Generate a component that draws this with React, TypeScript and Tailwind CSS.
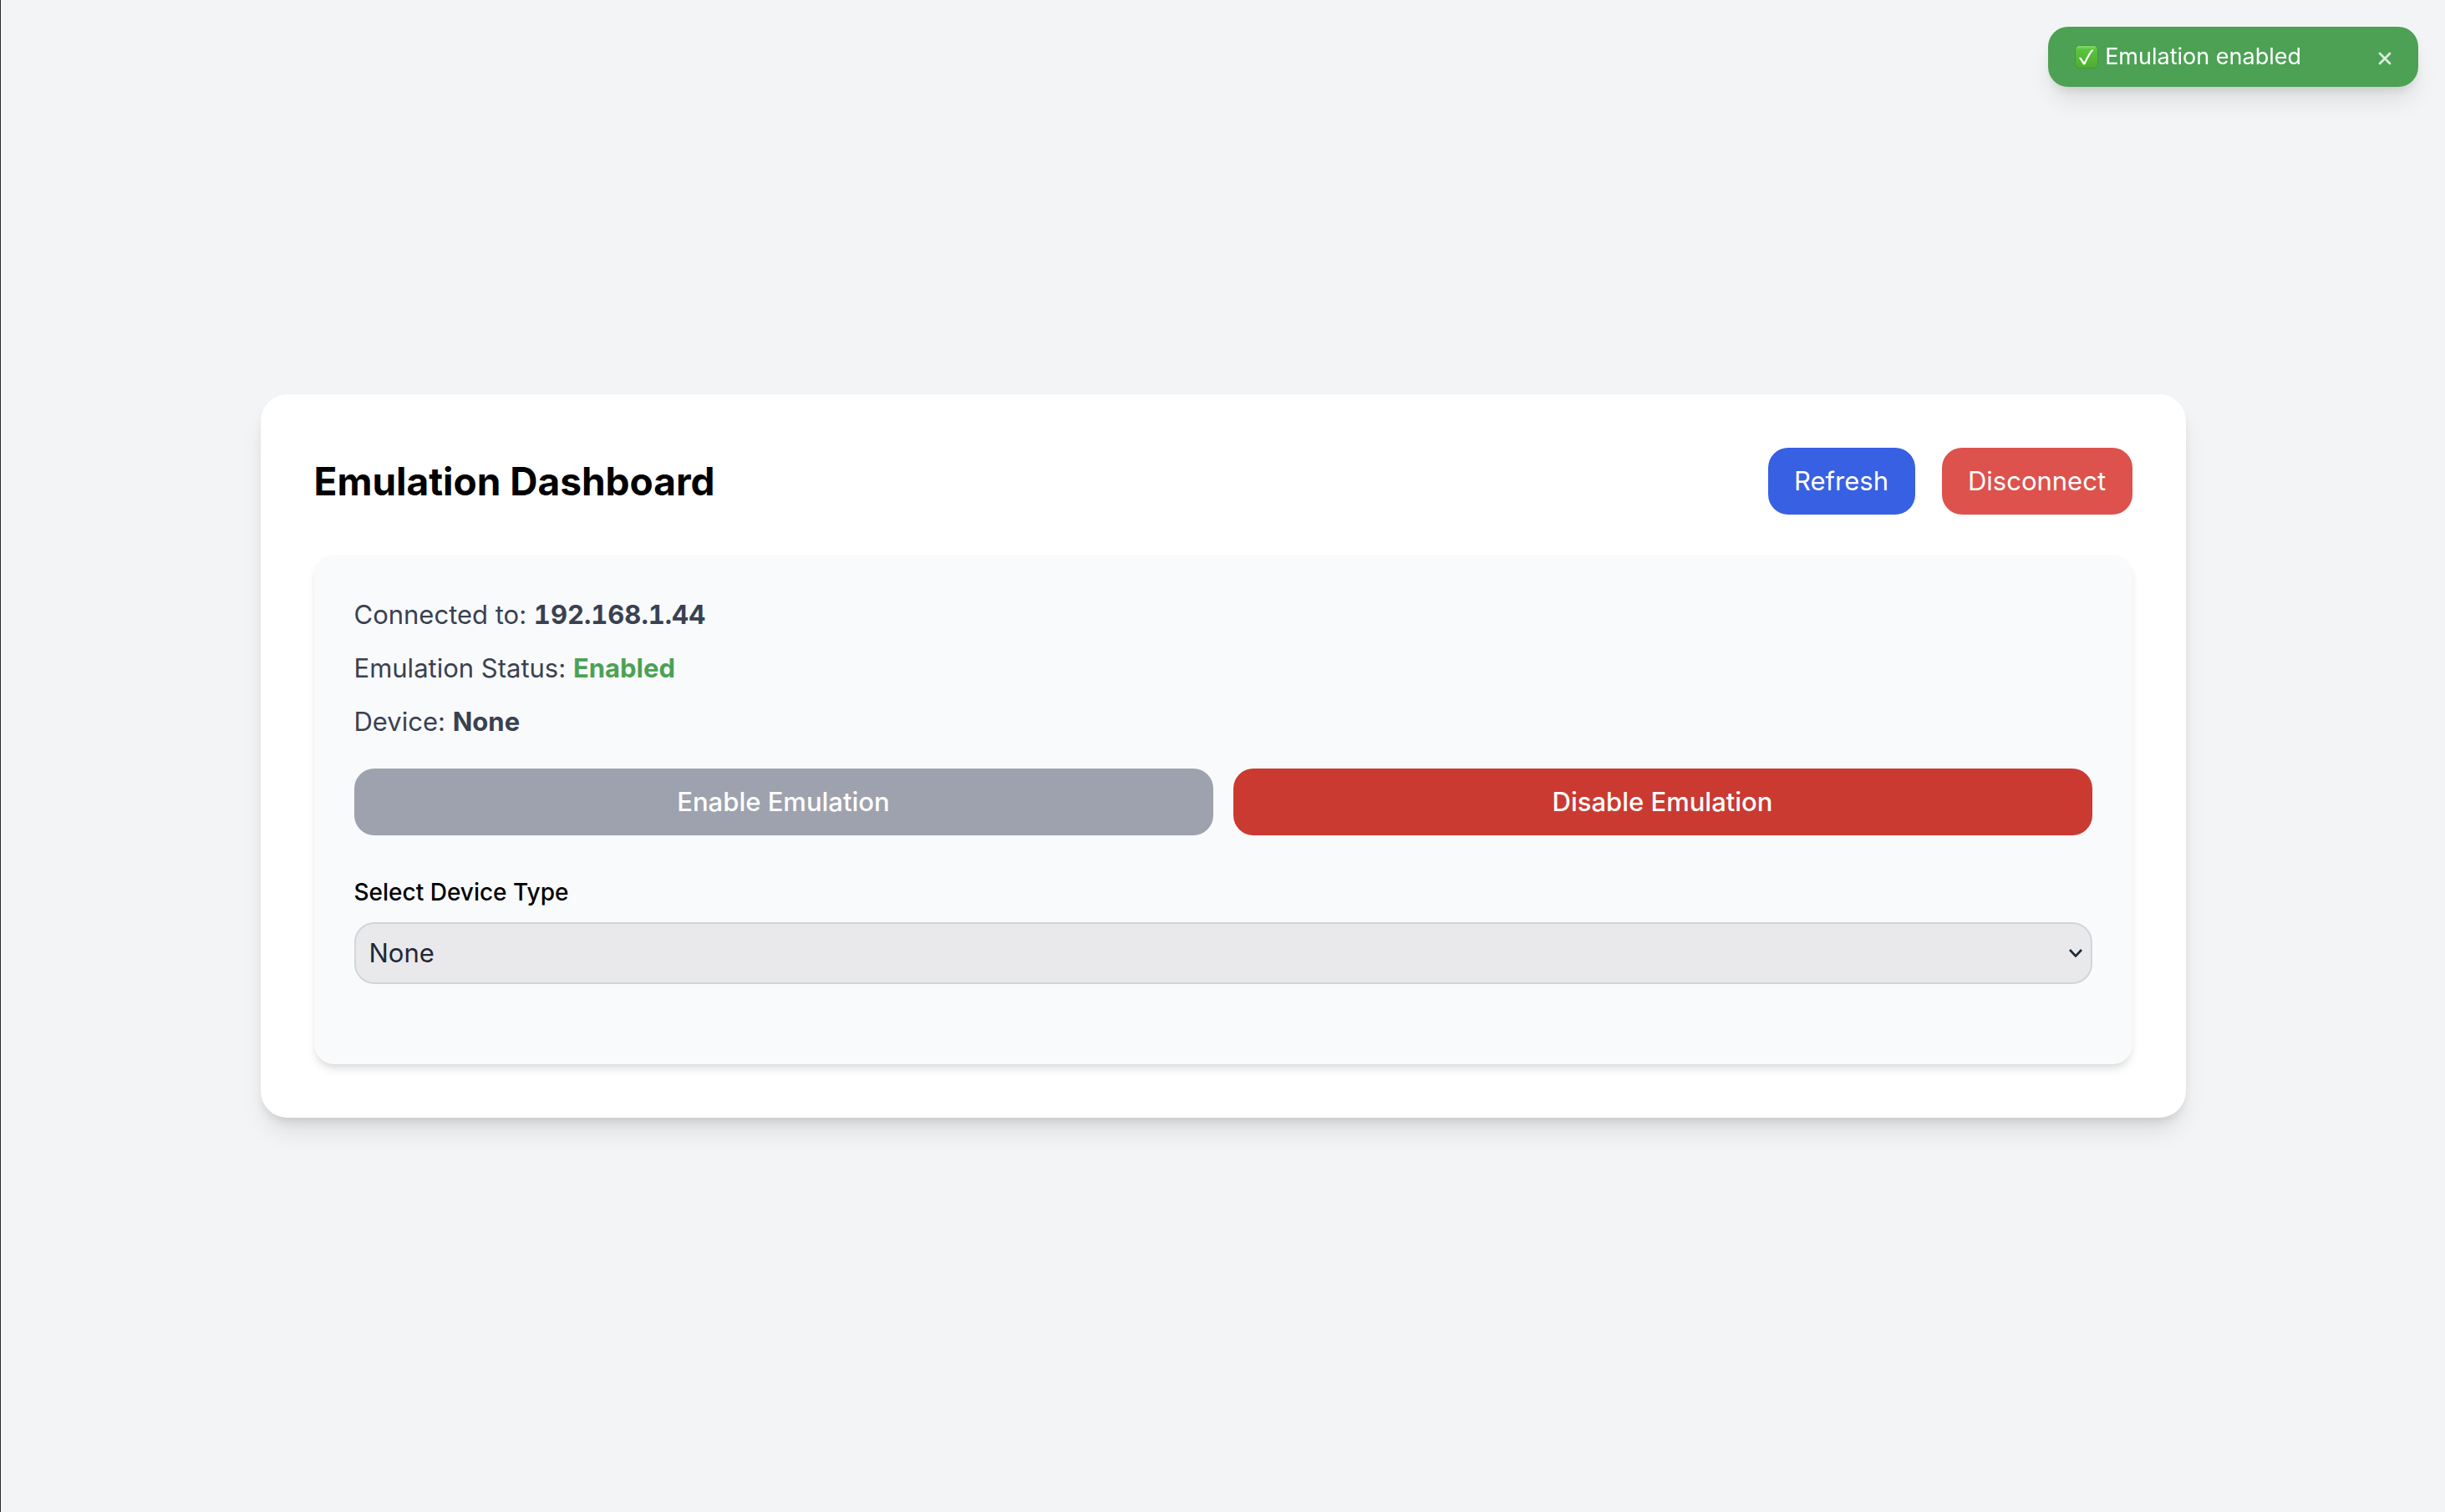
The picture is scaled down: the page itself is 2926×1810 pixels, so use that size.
import { useState } from "react";

function CheckBadge() {
  return (
    <svg viewBox="0 0 28 28" className="h-7 w-7 shrink-0" aria-hidden="true">
      <defs>
        <linearGradient id="badge" x1="0" y1="0" x2="0" y2="1">
          <stop offset="0" stopColor="#8fdc7c" />
          <stop offset="0.18" stopColor="#58c43c" />
          <stop offset="1" stopColor="#50ac31" />
        </linearGradient>
      </defs>
      <rect x="0.5" y="0.5" width="27" height="27" rx="5" fill="url(#badge)" stroke="#3f9a34" />
      <path
        d="M5 15.300c.9-.8 2.200-.6 2.900.4l3.300 4.900c2.300-5.200 5-10 8.100-14.300.6-.8 1.700-1 3.400-.7-4.300 5.300-7.500 11-10.100 17.200-.5.9-2.100.9-2.600.1z"
        fill="#fff"
      />
    </svg>
  );
}

function Toast({ onClose }: { onClose: () => void }) {
  return (
    <div
      role="status"
      className="fixed top-8 right-8 flex items-center rounded-3xl bg-[#4ca154] px-8 py-4 text-white shadow-[0_20px_30px_-6px_rgba(0,0,0,0.1),0_8px_12px_-4px_rgba(0,0,0,0.1)]"
    >
      <CheckBadge />
      <span className="ml-2 text-[27px] leading-10">Emulation enabled</span>
      <button type="button" aria-label="Dismiss" onClick={onClose} className="ml-23 flex h-10 w-4 items-center justify-center opacity-80">
        <svg viewBox="0 0 16 16" className="mt-1 h-4 w-4" aria-hidden="true">
          <path d="M2 2l12 12M14 2L2 14" stroke="currentColor" strokeWidth="2.800" strokeLinecap="round" />
        </svg>
      </button>
    </div>
  );
}

export default function App() {
  const [toast, setToast] = useState(true);
  const [device, setDevice] = useState("None");

  return (
    <div className="flex min-h-screen items-center justify-center border-l border-[#2b2b2d] bg-[#f3f4f6] font-['Inter',sans-serif] text-[31px] leading-12 text-black">
      {toast && <Toast onClose={() => setToast(false)} />}
      <main className="w-full max-w-[2304px] rounded-[32px] bg-white p-16 shadow-[0_20px_30px_-6px_rgba(0,0,0,0.1),0_8px_12px_-4px_rgba(0,0,0,0.1)]">
        <header className="mb-12 flex items-center justify-between">
          <h1 className="text-[46px] leading-16 font-bold">Emulation Dashboard</h1>
          <div className="flex gap-8">
            <button type="button" className="w-44 rounded-3xl bg-[#3860e2] py-4 text-white">
              Refresh
            </button>
            <button type="button" className="w-57 rounded-3xl bg-[#dd524c] py-4 text-white">
              Disconnect
            </button>
          </div>
        </header>

        <section className="rounded-3xl bg-[#f9fafc] p-12 shadow-[0_8px_12px_-2px_rgba(0,0,0,0.1),0_4px_8px_-4px_rgba(0,0,0,0.1)]">
          <div className="space-y-4 text-[#394150]">
            <p>
              Connected to: <strong className="tabular-nums">192.168.1.44</strong>
            </p>
            <p>
              Emulation Status: <strong className="text-[#4ca154]">Enabled</strong>
            </p>
            <p>
              Device: <strong>{device}</strong>
            </p>
          </div>

          <div className="mt-8 grid grid-cols-2 gap-6">
            <button type="button" disabled className="rounded-3xl bg-[#9ea2ae] py-4 font-medium text-white">
              Enable Emulation
            </button>
            <button type="button" className="rounded-3xl bg-[#ca3a31] py-4 font-medium text-white">
              Disable Emulation
            </button>
          </div>

          <div className="my-12">
            <label htmlFor="device-type" className="mb-4 block text-[28px] leading-10 font-medium">
              Select Device Type
            </label>
            <div className="relative">
              <select
                id="device-type"
                value={device}
                onChange={(e) => setDevice(e.target.value)}
                className="block h-[74px] w-full appearance-none rounded-3xl border-2 border-[#d1d5db] bg-[#e9e9eb] px-4 text-[#1f2937]"
              >
                <option>None</option>
              </select>
              <svg viewBox="0 0 16 10" className="pointer-events-none absolute top-8 right-3 h-[10px] w-4 text-[#1f2937]" aria-hidden="true">
                <path d="M1 1l7 7.500L15 1" fill="none" stroke="currentColor" strokeWidth="2.600" />
              </svg>
            </div>
          </div>
        </section>
      </main>
    </div>
  );
}
